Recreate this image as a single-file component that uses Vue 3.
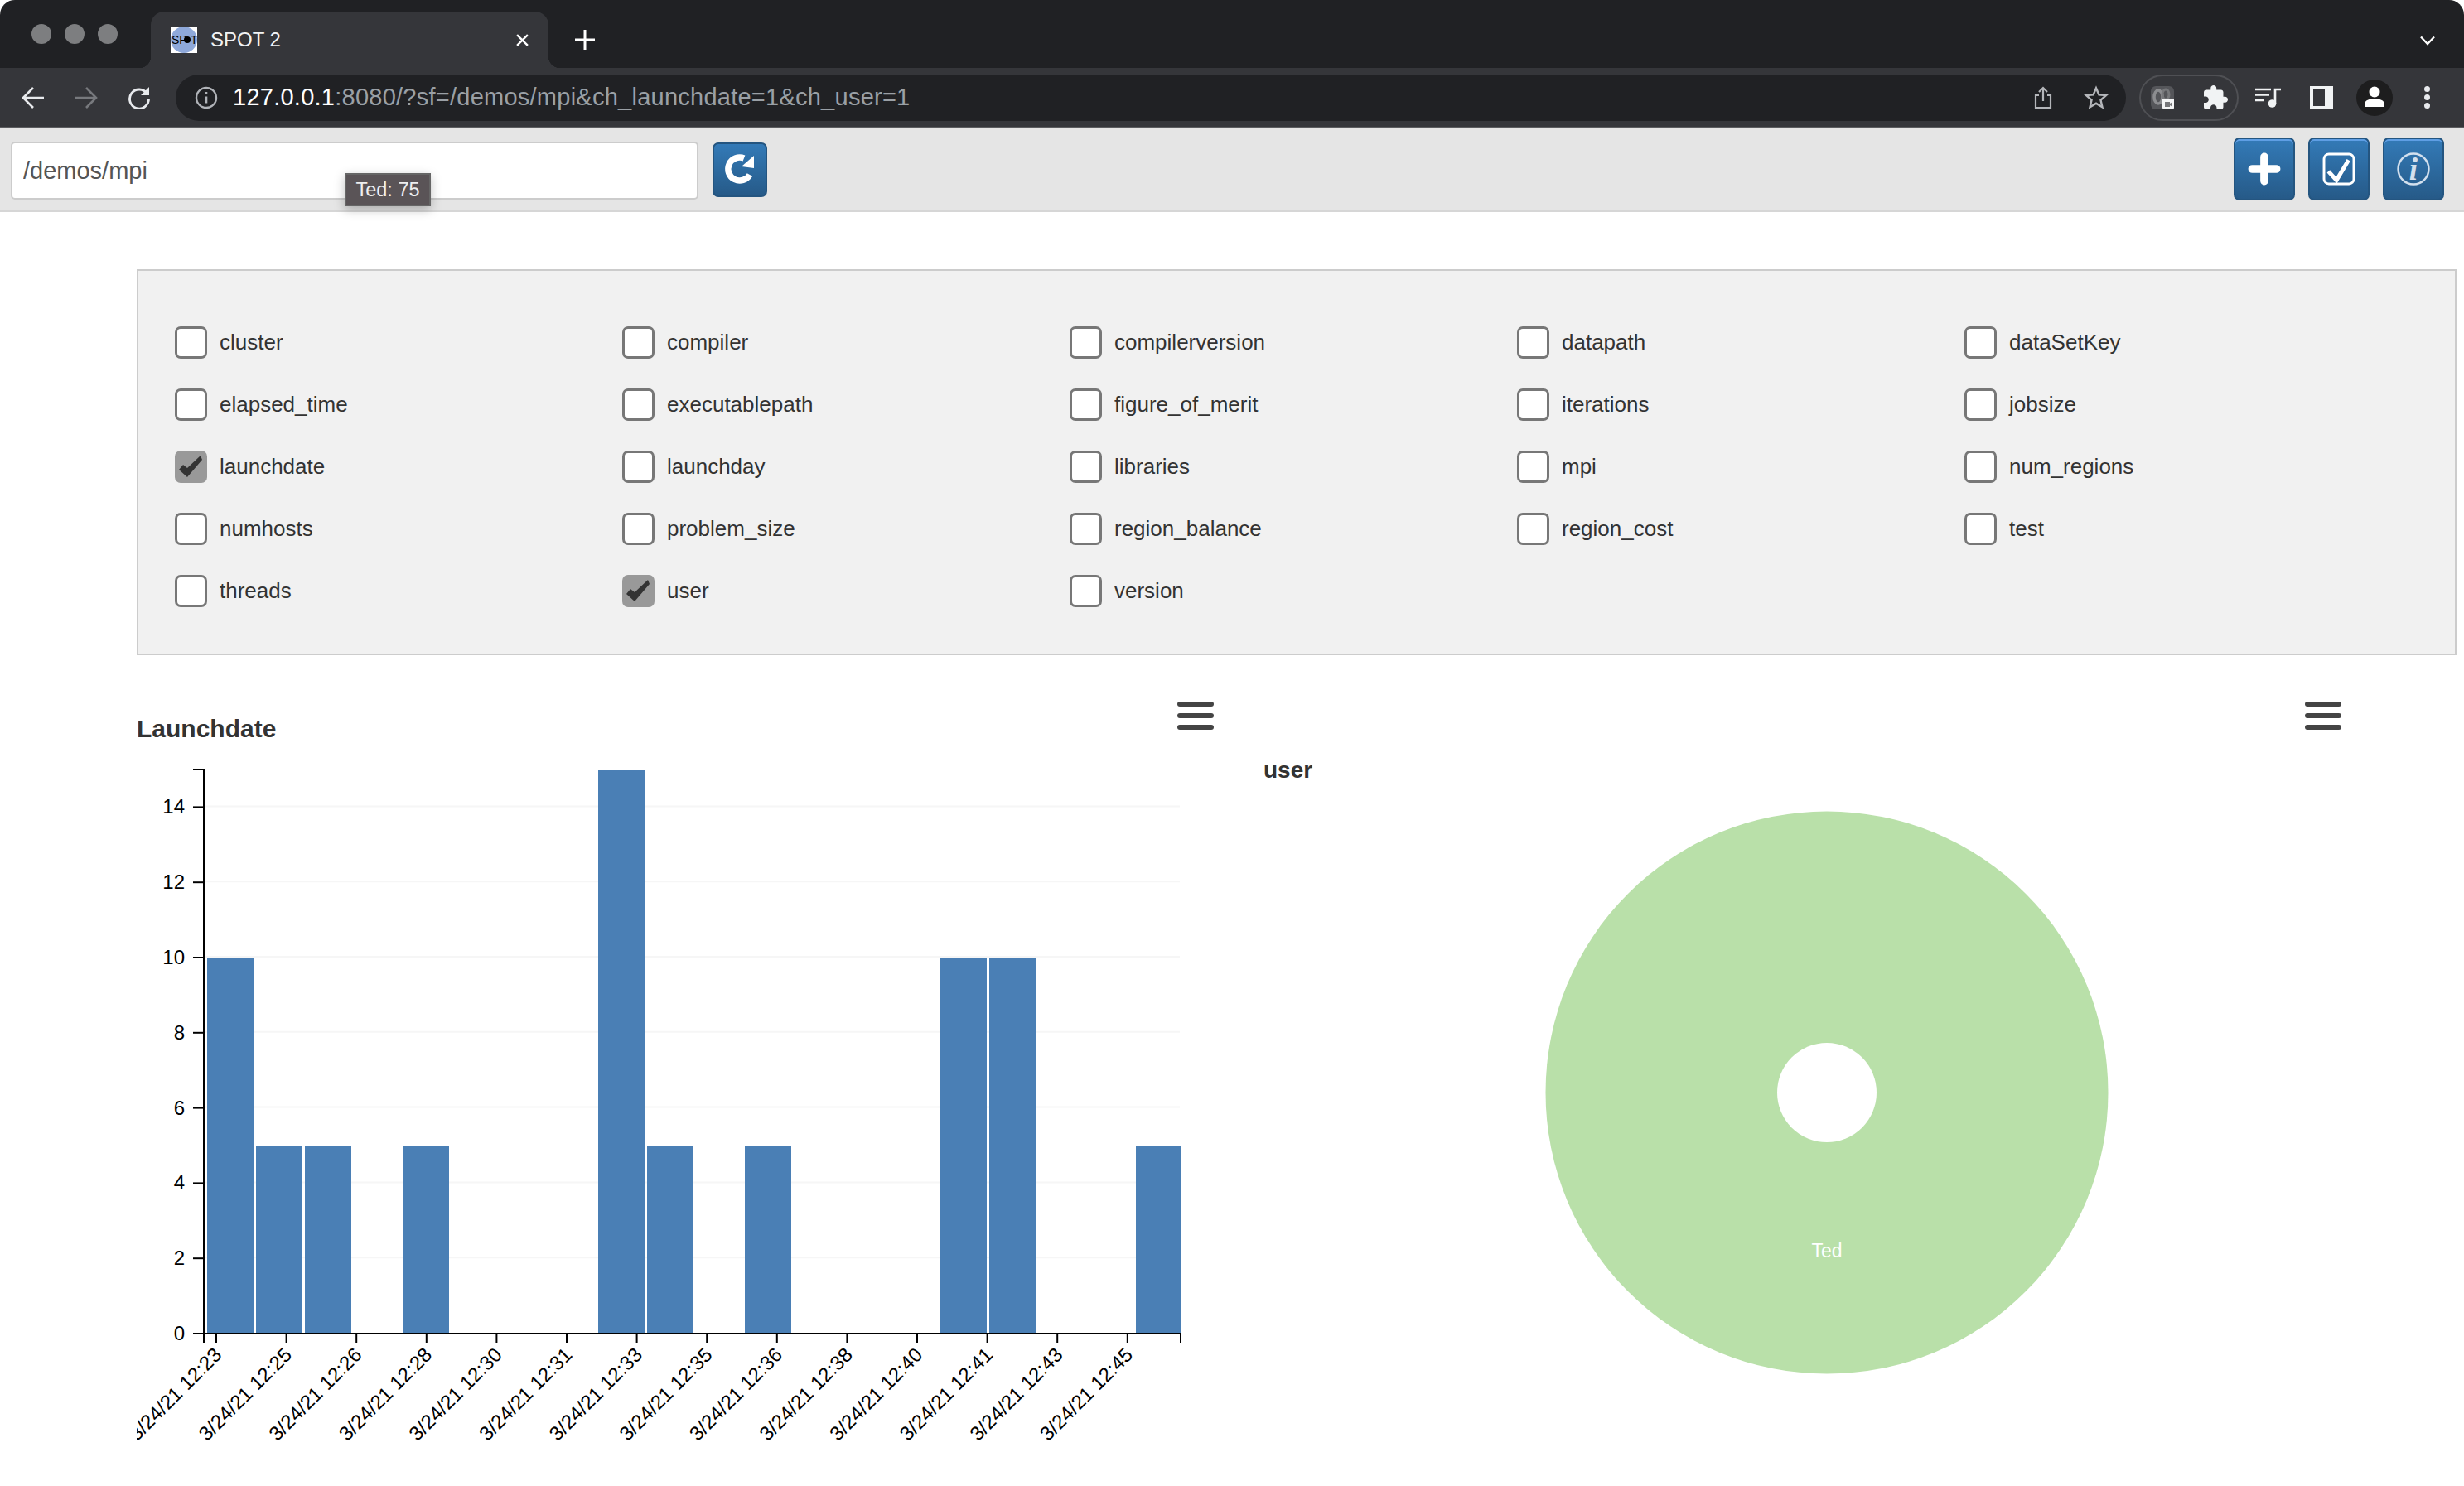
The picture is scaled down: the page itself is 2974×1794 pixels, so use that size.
<script setup>
const fields = [
  'cluster', 'compiler', 'compilerversion', 'datapath', 'dataSetKey',
  'elapsed_time', 'executablepath', 'figure_of_merit', 'iterations', 'jobsize',
  'launchdate', 'launchday', 'libraries', 'mpi', 'num_regions',
  'numhosts', 'problem_size', 'region_balance', 'region_cost', 'test',
  'threads', 'user', 'version'
]
const checked = ['launchdate', 'user']

const base = 1610
const unit = 45.4
const counts = [10, 5, 5, 0, 5, 0, 0, 0, 15, 5, 0, 5, 0, 0, 0, 10, 10, 0, 0, 5]
const bars = counts
  .map((c, i) => ({ x: 250 + i * 59, w: i === 19 ? 54 : 56, y: base - c * unit, h: c * unit - 1, c }))
  .filter(b => b.c > 0)
const yTicks = [0, 2, 4, 6, 8, 10, 12, 14].map(v => ({ v, y: base - v * unit }))
const times = ['12:23', '12:25', '12:26', '12:28', '12:30', '12:31', '12:33', '12:35', '12:36', '12:38', '12:40', '12:41', '12:43', '12:45']
const xTicks = times.map((t, i) => ({ label: '3/24/21 ' + t, x: 261 + i * 84.6 }))
</script>

<template>
  <div class="page">
    <div class="tabstrip">
      <div class="lights"><i></i><i></i><i></i></div>
      <div class="tab">
        <svg class="favicon" viewBox="0 0 32 32">
          <rect width="32" height="32" fill="#fff" />
          <circle cx="16" cy="16" r="16" fill="#8fa9da" />
          <text x="1" y="21" class="fav-text">SP</text>
          <circle cx="20" cy="16" r="4" fill="#000" />
          <text x="24" y="21" class="fav-text">T</text>
        </svg>
        <span class="tab-title">SPOT 2</span>
        <svg class="tab-close" viewBox="0 0 14 14"><path d="M1 1l12 12M13 1L1 13" stroke="#fff" stroke-width="2.2" fill="none" /></svg>
      </div>
      <svg class="new-tab" viewBox="0 0 24 24"><path d="M12 0v24M0 12h24" stroke="#fff" stroke-width="3" fill="none" /></svg>
      <svg class="tab-menu" viewBox="0 0 18 12"><path d="M1 1.5l8 8.5 8-8.5" stroke="#fff" stroke-width="2.4" fill="none" /></svg>
    </div>

    <div class="toolbar">
      <svg class="nav" viewBox="0 0 28 28"><path d="M27 14H3M14 2L2 14l12 12" stroke="#e8eaed" stroke-width="2.6" fill="none" /></svg>
      <svg class="nav nav-next" viewBox="0 0 28 28"><path d="M1 14h24M14 2l12 12-12 12" stroke="#77797d" stroke-width="2.6" fill="none" /></svg>
      <svg class="nav nav-next" viewBox="0 0 28 28">
        <path d="M23.5 9A11.5 11.5 0 1 0 25.5 15" stroke="#e8eaed" stroke-width="2.8" fill="none" />
        <path d="M26 1v10H16z" fill="#e8eaed" />
      </svg>
      <div class="omnibox">
        <svg class="site-info" viewBox="0 0 28 28">
          <circle cx="14" cy="14" r="12" stroke="#b0b3b8" stroke-width="2.4" fill="none" />
          <path d="M14 12.5v8M14 7v3" stroke="#b0b3b8" stroke-width="2.6" fill="none" />
        </svg>
        <span class="url"><b>127.0.0.1</b>:8080/?sf=/demos/mpi&amp;ch_launchdate=1&amp;ch_user=1</span>
        <svg class="share" viewBox="0 0 22 28">
          <path d="M6 11H2v15h18V11h-4M11 18V2M6 7l5-5 5 5" stroke="#b4b6ba" stroke-width="2.2" fill="none" />
        </svg>
        <svg class="star" viewBox="2 2 20 19"><path fill="#b4b6ba" d="M22 9.24l-7.19-.62L12 2 9.19 8.63 2 9.24l5.46 4.73L5.82 21 12 17.27 18.18 21l-1.63-7.03L22 9.24zM12 15.4l-3.76 2.27 1-4.28-3.32-2.88 4.38-.38L12 6.1l1.71 4.04 4.38.38-3.32 2.88 1 4.28L12 15.4z" /></svg>
      </div>
      <div class="ext-pill">
        <svg class="ext-app" viewBox="0 0 28 28">
          <rect width="28" height="28" rx="6" fill="#55565a" />
          <ellipse cx="9" cy="13" rx="5" ry="8" stroke="#8c8d90" stroke-width="3.5" fill="none" />
          <ellipse cx="18" cy="10" rx="4" ry="6" stroke="#77787b" stroke-width="3" fill="none" />
          <path d="M14 16h14v10a2 2 0 0 1-2 2H16a2 2 0 0 1-2-2z" fill="#f4f5f6" />
          <path d="M17 19h6v6h-6zM23 21l3-2v6l-3-2z" fill="#77787b" />
        </svg>
        <svg class="puzzle" viewBox="2 1 21 21"><path fill="#f1f3f4" d="M20.5 11H19V7c0-1.1-.9-2-2-2h-4V3.5C13 2.12 11.88 1 10.5 1S8 2.12 8 3.5V5H4c-1.1 0-1.99.9-1.99 2v3.8H3.5c1.49 0 2.7 1.21 2.7 2.7s-1.21 2.7-2.7 2.7H2V20c0 1.1.9 2 2 2h3.8v-1.5c0-1.49 1.21-2.7 2.7-2.7 1.49 0 2.7 1.21 2.7 2.7V22H17c1.1 0 2-.9 2-2v-4h1.5c1.38 0 2.5-1.12 2.5-2.5S21.88 11 20.5 11z" /></svg>
      </div>
      <svg class="queue" viewBox="0 0 32 24">
        <path d="M0 2h19M0 8.500h17M0 15h11" stroke="#f1f3f4" stroke-width="2.6" fill="none" />
        <path d="M24 19V2h7" stroke="#f1f3f4" stroke-width="2.6" fill="none" />
        <circle cx="20.500" cy="19" r="4.800" fill="#f1f3f4" />
      </svg>
      <svg class="side" viewBox="0 0 28 28">
        <rect width="28" height="28" fill="#f1f3f4" />
        <rect x="4" y="3" width="14" height="21" fill="#35363a" />
      </svg>
      <svg class="avatar" viewBox="0 0 44 44">
        <circle cx="22" cy="22" r="22" fill="#1d1d1e" />
        <circle cx="22" cy="15" r="6.500" fill="#fff" />
        <path d="M10 33v-3c0-5 6-7 12-7s12 2 12 7v3z" fill="#fff" />
      </svg>
      <div class="kebab"><i></i><i></i><i></i></div>
    </div>

    <div class="appbar">
      <input class="path" type="text" value="/demos/mpi" readonly />
      <button class="btn btn-reload">
        <svg viewBox="0 0 62 62">
          <path d="M36 17A14 14 0 1 0 43 37" stroke="#fff" stroke-width="7.500" fill="none" />
          <path d="M48 14v15L33 27z" fill="#fff" />
        </svg>
      </button>
      <div class="tools">
        <button class="btn btn-tool">
          <svg viewBox="0 0 72 72"><path d="M36 21v30M21 36h30" stroke="#fff" stroke-width="10" stroke-linecap="round" fill="none" /></svg>
        </button>
        <button class="btn btn-tool">
          <svg viewBox="0 0 72 72">
            <rect x="17.500" y="17.500" width="37" height="37" rx="6" stroke="#fff" stroke-width="3" fill="none" />
            <path d="M23 39l10 11 15-25" stroke="#fff" stroke-width="5" fill="none" />
          </svg>
        </button>
        <button class="btn btn-tool">
          <svg viewBox="0 0 72 72">
            <circle cx="36" cy="36" r="19" stroke="#d3e0ee" stroke-width="2.500" fill="none" />
            <text x="36" y="49" class="info-i">i</text>
          </svg>
        </button>
      </div>
    </div>

    <div class="tip">Ted: 75</div>

    <div class="main">
      <div class="panel">
        <div v-for="f in fields" :key="f" class="field">
          <div class="box" :class="{ on: checked.includes(f) }">
            <svg v-if="checked.includes(f)" viewBox="0 0 39 39"><path d="M5 23l5-6 5 4L31 6l2 5-18 21z" fill="#333" /></svg>
          </div>
          <span>{{ f }}</span>
        </div>
      </div>

      <div class="charts">
        <div class="chart chart-left">
          <div class="head">
            <h4>Launchdate</h4>
            <div class="burger"><i></i><i></i><i></i></div>
          </div>
          <svg class="bar-chart" viewBox="165 900 1270 894">
            <line v-for="t in yTicks.slice(1)" :key="t.v" x1="247" x2="1424" :y1="t.y - 1" :y2="t.y - 1" stroke="#f6f6f6" stroke-width="2" />
            <rect v-for="b in bars" :key="b.x" :x="b.x" :y="b.y" :width="b.w" :height="b.h" fill="#4a7fb5" />
            <path d="M233 929h13v681" stroke="#000" stroke-width="2" fill="none" />
            <path d="M233 1610h1192v11M246 1610v11" stroke="#000" stroke-width="2" fill="none" />
            <g v-for="t in yTicks" :key="'y' + t.v">
              <line x1="233" x2="246" :y1="t.y" :y2="t.y" stroke="#000" stroke-width="2" />
              <text x="223" :y="t.y + 8" text-anchor="end" class="tick">{{ t.v }}</text>
            </g>
            <g v-for="t in xTicks" :key="t.label">
              <line :x1="t.x" :x2="t.x" y1="1610" y2="1621" stroke="#000" stroke-width="2" />
              <text :x="t.x + 8" y="1637" text-anchor="end" class="tick" :transform="`rotate(-45 ${t.x + 8} 1637)`">{{ t.label }}</text>
            </g>
          </svg>
        </div>

        <div class="chart chart-right">
          <div class="burger"><i></i><i></i><i></i></div>
          <h5>user</h5>
          <svg class="pie" viewBox="0 0 682 682">
            <circle cx="341" cy="341" r="339.500" fill="#b9e0a9" />
            <circle cx="341" cy="341" r="60" fill="#fff" />
            <text x="341" y="540" text-anchor="middle" class="pie-label">Ted</text>
          </svg>
        </div>
      </div>
    </div>
  </div>
</template>

<style>
html, body {
  margin: 0;
  background: #fff;
}
</style>

<style scoped>
.page {
  position: relative;
  width: 2974px;
  height: 1794px;
  overflow: hidden;
  background: #fff;
  font-family: "Liberation Sans", Arial, sans-serif;
  color: #333;
}

/* browser window */
.tabstrip {
  display: flex;
  height: 82px;
  background: #202124;
  border-radius: 18px 18px 0 0;
  box-sizing: border-box;
}
.lights {
  display: flex;
  gap: 16px;
  padding: 29px 0 0 38px;
}
.lights i {
  width: 24px;
  height: 24px;
  border-radius: 50%;
  background: #7d7e80;
}
.tab {
  position: relative;
  display: flex;
  align-items: center;
  box-sizing: border-box;
  width: 480px;
  height: 68px;
  margin: 14px 0 0 40px;
  padding: 0 24px;
  background: #35363a;
  border-radius: 16px 16px 0 0;
}
.tab::before,
.tab::after {
  content: "";
  position: absolute;
  bottom: 0;
  width: 14px;
  height: 14px;
}
.tab::before {
  left: -14px;
  background: radial-gradient(circle at 0 0, #202124 14px, #35363a 14.500px);
}
.tab::after {
  right: -14px;
  background: radial-gradient(circle at 100% 0, #202124 14px, #35363a 14.500px);
}
.favicon {
  width: 32px;
  height: 32px;
  flex: none;
}
.fav-text {
  font: 14px "Liberation Sans", sans-serif;
  fill: #000;
}
.tab-title {
  margin-left: 16px;
  font-size: 24px;
  color: #f1f3f4;
}
.tab-close {
  width: 15px;
  height: 15px;
  margin-left: auto;
}
.new-tab {
  width: 24px;
  height: 24px;
  margin: 36px 0 0 32px;
}
.tab-menu {
  width: 18px;
  height: 12px;
  margin: 43px 35px 0 auto;
}
.toolbar {
  display: flex;
  align-items: center;
  box-sizing: border-box;
  height: 73px;
  padding: 0 0 0 26px;
  background: #35363a;
  border-bottom: 2px solid #5c5d60;
}
.nav {
  width: 28px;
  height: 28px;
  flex: none;
}
.nav-next {
  margin-left: 36px;
}
.omnibox {
  display: flex;
  align-items: center;
  width: 2354px;
  height: 56px;
  margin-left: 30px;
  flex: none;
  background: #202124;
  border-radius: 28px;
}
.site-info {
  width: 28px;
  height: 28px;
  margin-left: 23px;
}
.url {
  margin-left: 18px;
  font-size: 29px;
  letter-spacing: 0.25px;
  color: #9aa0a6;
  white-space: nowrap;
}
.url b {
  font-weight: normal;
  color: #fff;
}
.share {
  width: 22px;
  height: 28px;
  margin-left: auto;
}
.star {
  width: 30px;
  height: 29px;
  margin: 0 21px 0 38px;
}
.ext-pill {
  display: flex;
  align-items: center;
  box-sizing: border-box;
  width: 120px;
  height: 56px;
  margin-left: 16px;
  flex: none;
  border: 2px solid #4f5054;
  border-radius: 28px;
}
.ext-app {
  width: 28px;
  height: 28px;
  margin-left: 12px;
}
.puzzle {
  width: 29px;
  height: 29px;
  margin-left: 36px;
}
.queue {
  width: 32px;
  height: 24px;
  margin-left: 20px;
  flex: none;
}
.side {
  width: 28px;
  height: 28px;
  margin-left: 34px;
  flex: none;
}
.avatar {
  width: 44px;
  height: 44px;
  margin-left: 28px;
  flex: none;
}
.kebab {
  display: flex;
  flex-direction: column;
  gap: 3px;
  margin-left: 38px;
}
.kebab i {
  width: 7px;
  height: 7px;
  border-radius: 50%;
  background: #e8eaed;
}

/* app header */
.appbar {
  display: flex;
  box-sizing: border-box;
  height: 101px;
  padding: 0 24px 0 13px;
  background: #e5e5e5;
  border-bottom: 2px solid #d6d6d6;
}
.path {
  box-sizing: border-box;
  width: 830px;
  height: 70px;
  margin-top: 16px;
  padding: 0 13px;
  border: 2px solid #ccc;
  border-radius: 5px;
  outline: none;
  background: #fff;
  font: 29px "Liberation Sans", Arial, sans-serif;
  color: #555;
}
.btn {
  box-sizing: border-box;
  padding: 0;
  border: 2px solid #245580;
  border-radius: 7px;
  background: linear-gradient(#337ab7, #265a88);
  box-shadow: inset 0 2px 0 #5e9ee4;
}
.btn svg {
  display: block;
  width: 100%;
  height: 100%;
}
.btn-reload {
  width: 66px;
  height: 66px;
  margin: 17px 0 0 17px;
  box-shadow: none;
}
.tools {
  display: flex;
  gap: 16px;
  margin: 11px 0 0 auto;
}
.btn-tool {
  width: 74px;
  height: 76px;
}
.info-i {
  font: italic bold 38px "Liberation Serif", serif;
  fill: #d3e0ee;
  text-anchor: middle;
}
.tip {
  position: absolute;
  left: 416px;
  top: 209px;
  box-sizing: border-box;
  width: 104px;
  height: 40px;
  border: 2px solid #666;
  background: #5a5457;
  box-shadow: 0 4px 12px rgba(0, 0, 0, 0.25);
  font-size: 23.5px;
  line-height: 36px;
  text-align: center;
  color: #eee;
}

/* page body */
.main {
  padding: 69px 9px 0 165px;
}
.panel {
  display: grid;
  grid-template-columns: repeat(5, 540px);
  row-gap: 36px;
  box-sizing: border-box;
  height: 466px;
  padding: 67px 0 0 44px;
  background: #f1f1f1;
  border: 2px solid #ccc;
  align-content: start;
}
.field {
  display: flex;
  align-items: center;
  gap: 15px;
  height: 39px;
  font-size: 26px;
  color: #333;
}
.box {
  box-sizing: border-box;
  width: 39px;
  height: 39px;
  border: 3px solid #777;
  border-radius: 7px;
  background: #fff;
}
.box.on {
  border: 0;
  background: #999;
}
.box svg {
  display: block;
}
.charts {
  display: flex;
}
.chart {
  width: 1360px;
  flex: none;
}
.head {
  display: flex;
  justify-content: space-between;
  align-items: flex-start;
  height: 109px;
  padding-right: 60px;
}
.head h4 {
  margin: 71px 0 0 0;
  font-size: 30px;
  line-height: 36px;
  color: #333;
}
.burger {
  display: flex;
  flex-direction: column;
  gap: 8px;
  width: 44px;
  margin-top: 56px;
}
.burger i {
  height: 6px;
  border-radius: 3px;
  background: #444;
}
.bar-chart {
  display: block;
  width: 1270px;
  height: 894px;
}
.tick {
  font-size: 24px;
  fill: #000;
}
.chart-right {
  display: flex;
  flex-direction: column;
}
.chart-right .burger {
  align-self: flex-end;
  margin-right: 59px;
}
.chart-right h5 {
  margin: 32px 0 0 0;
  font-size: 28px;
  line-height: 34px;
  color: #333;
}
.pie {
  display: block;
  width: 682px;
  height: 682px;
  margin: 31px auto 0;
}
.pie-label {
  font-size: 23px;
  fill: #fff;
}
</style>
